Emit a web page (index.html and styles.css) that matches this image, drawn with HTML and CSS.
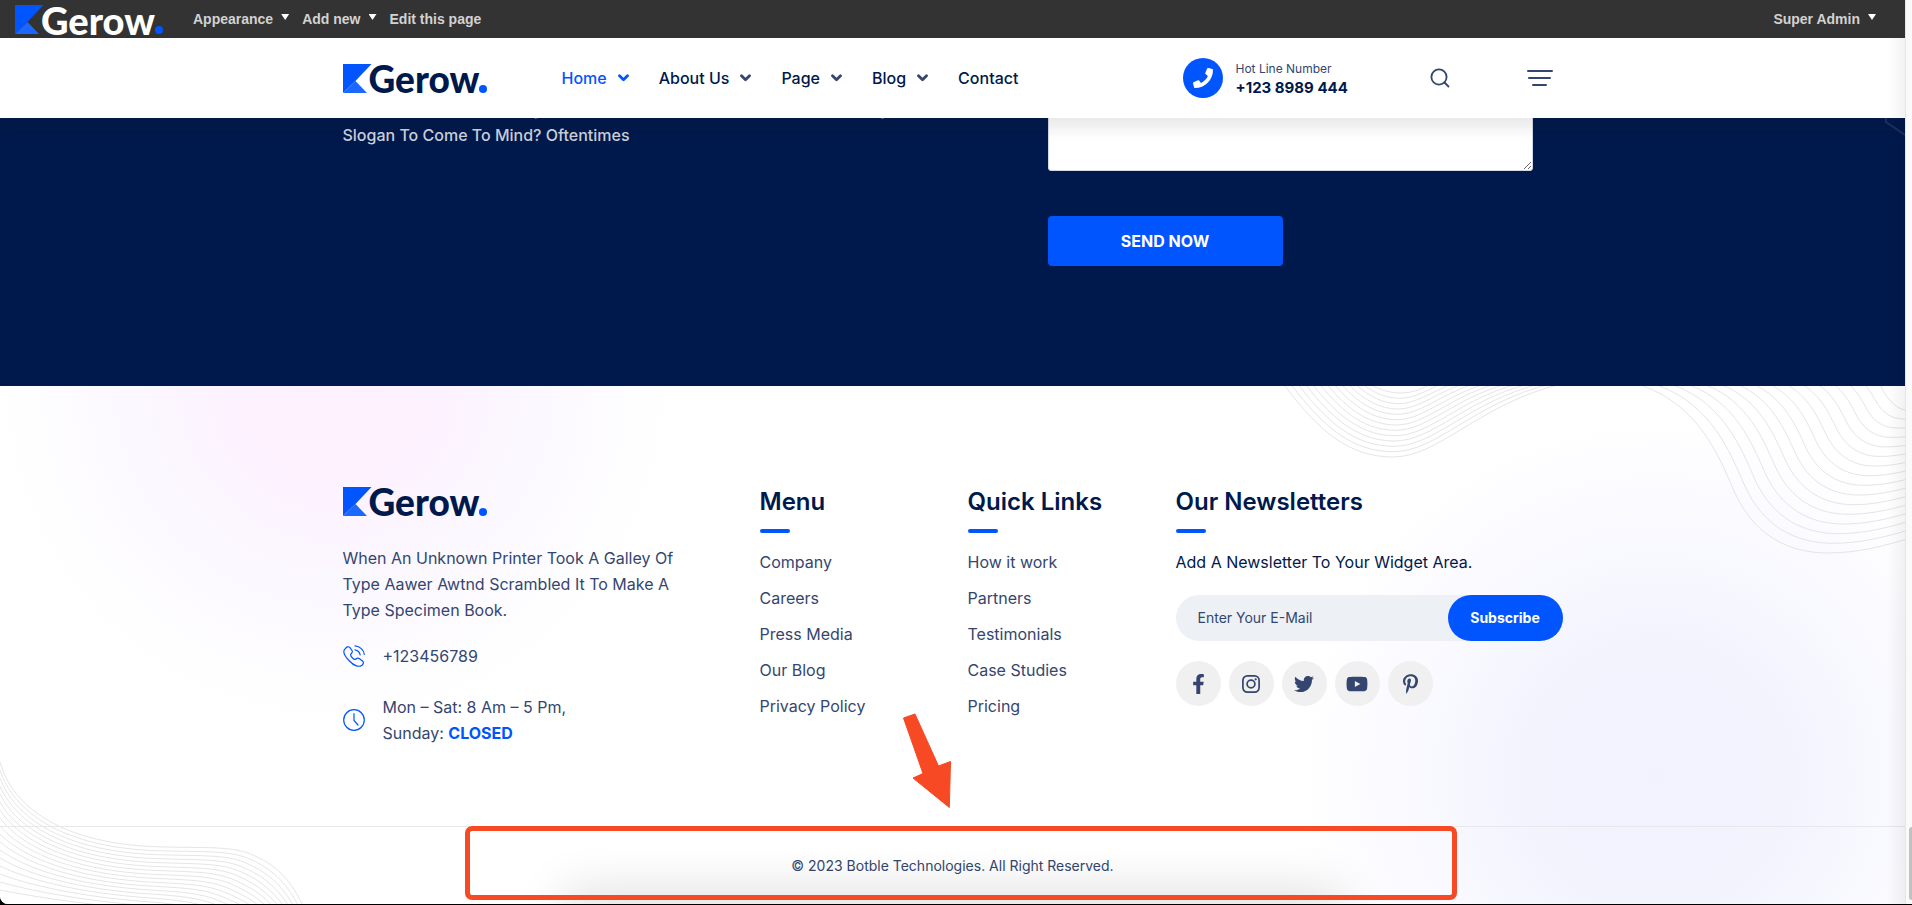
FILE: index.html
```html
<!DOCTYPE html>
<html lang="en">
<head>
<meta charset="utf-8">
<title>Gerow</title>
<link rel="stylesheet" href="styles.css">
</head>
<body>
<svg class="symbols" aria-hidden="true">
  <symbol id="mark" viewBox="0 0 29 29"><path d="M0 0H28.500L12.500 17L0 29Z" fill="#0055ff"/><path d="M0 29L12.500 17L24 29Z" fill="#1c68ff"/></symbol>
  <symbol id="chevron" viewBox="0 0 11 8"><path d="M1.500 1.800L5.500 5.800L9.500 1.800" fill="none" stroke="currentColor" stroke-width="2.800" stroke-linecap="round" stroke-linejoin="round"/></symbol>
</svg>
<div class="page">
  <div class="top">
    <div class="admin-bar">
      <a class="logo logo-light" href="#"><svg class="logo-mark"><use href="#mark"/></svg><span class="logo-name">Gerow</span><i class="logo-dot"></i></a>
      <nav class="admin-menu">
        <a class="has-caret" href="#">Appearance</a>
        <a class="has-caret" href="#">Add new</a>
        <a href="#">Edit this page</a>
      </nav>
      <a class="has-caret admin-user" href="#">Super Admin</a>
    </div>
    <header class="site-header">
      <div class="container header-row">
        <a class="logo" href="#"><svg class="logo-mark"><use href="#mark"/></svg><span class="logo-name">Gerow</span><i class="logo-dot"></i></a>
        <nav class="main-nav">
          <a class="active" href="#">Home <svg class="chevron"><use href="#chevron"/></svg></a>
          <a href="#">About Us <svg class="chevron"><use href="#chevron"/></svg></a>
          <a href="#">Page <svg class="chevron"><use href="#chevron"/></svg></a>
          <a href="#">Blog <svg class="chevron"><use href="#chevron"/></svg></a>
          <a href="#">Contact</a>
        </nav>
        <div class="header-actions">
          <div class="hotline">
            <span class="hotline-icon"><svg width="20" height="20" viewBox="0 0 512 512"><path fill="#fff" d="M493.400 24.600l-104-24c-11.300-2.600-22.900 3.300-27.500 13.900l-48 112c-4.200 9.800-1.400 21.300 6.900 28l60.600 49.600c-36 76.700-98.900 140.500-177.200 177.200l-49.600-60.600c-6.800-8.300-18.200-11.100-28-6.900l-112 48C3.900 366.500-2 378.100.6 389.400l24 104C27.100 504.200 36.700 512 48 512c256.100 0 464-207.500 464-464 0-11.200-7.700-20.900-18.600-23.400z"/></svg></span>
            <div class="hotline-text"><span>Hot Line Number</span><a href="#">+123 8989 444</a></div>
          </div>
          <button class="icon-button" type="button" aria-label="Search"><svg width="20" height="20" viewBox="0 0 20 20" fill="none" stroke="#34466f" stroke-width="1.800" stroke-linecap="round"><circle cx="9" cy="9" r="7.600"/><path d="M14.500 14.500L18.500 18.500"/></svg></button>
          <button class="icon-button" type="button" aria-label="Open menu"><svg width="26" height="18" viewBox="0 0 26 18" fill="none" stroke="#34466f" stroke-width="2" stroke-linecap="round"><path d="M1 2H25M2 9H23M6 16H19"/></svg></button>
        </div>
      </div>
    </header>
  </div>

  <section class="contact">
    <svg class="contact-shape" width="20" height="18" viewBox="0 0 20 18"><path d="M1 0V4L20 17" fill="none" stroke="#1b3263" stroke-width="2"/></svg>
    <div class="container contact-row">
      <p class="contact-text">Ever Find Yourself Staring At Your Computer Screen A Good Consulting<br>Slogan To Come To Mind? Oftentimes</p>
      <form class="contact-form">
        <textarea aria-label="Message"></textarea>
        <button class="send" type="button">SEND NOW</button>
      </form>
    </div>
  </section>

  <footer class="footer">
    <svg class="waves waves-right" width="640" height="180" viewBox="1266 0 640 180" data-waves="right"></svg>
    <svg class="waves waves-left" width="320" height="160" viewBox="0 744 320 160" data-waves="left"></svg>
    <div class="container footer-grid">
      <div class="about">
        <a class="logo" href="#"><svg class="logo-mark"><use href="#mark"/></svg><span class="logo-name">Gerow</span><i class="logo-dot"></i></a>
        <p>When An Unknown Printer Took A Galley Of<br>Type Aawer Awtnd Scrambled It To Make A<br>Type Specimen Book.</p>
        <ul class="info">
          <li><svg width="22" height="22" viewBox="0 0 22 22" fill="none" stroke="#0055ff" stroke-width="1.200" stroke-linecap="round"><path d="M2 4C3.500 2 5.500 .9 7 2.600L9 5.500C10 7 9 8 8 9C7 10 8 11.500 9.500 13C11 14.500 12 15 13 14C14 13 15 12.500 16.500 13.700L19.500 16C21 17.500 20.500 19 19 20.200C16 22.500 11 21 6.500 16C1 10.500-.5 6.500 2 4ZM12 .8C17 1.300 20.800 5 21.300 9.500M12 4.800C14.500 5.200 16.700 7.300 17.200 10"/></svg><span>+123456789</span></li>
          <li><svg width="22" height="22" viewBox="0 0 22 22" fill="none" stroke="#0055ff" stroke-width="1.200" stroke-linecap="round"><circle cx="11" cy="11" r="10.300"/><path d="M11 4.500V11.500L15 16"/></svg><span>Mon – Sat: 8 Am – 5 Pm,<br>Sunday: <b>CLOSED</b></span></li>
        </ul>
      </div>
      <div>
        <h2>Menu</h2>
        <ul class="links">
          <li><a href="#">Company</a></li>
          <li><a href="#">Careers</a></li>
          <li><a href="#">Press Media</a></li>
          <li><a href="#">Our Blog</a></li>
          <li><a href="#">Privacy Policy</a></li>
        </ul>
      </div>
      <div>
        <h2>Quick Links</h2>
        <ul class="links">
          <li><a href="#">How it work</a></li>
          <li><a href="#">Partners</a></li>
          <li><a href="#">Testimonials</a></li>
          <li><a href="#">Case Studies</a></li>
          <li><a href="#">Pricing</a></li>
        </ul>
      </div>
      <div>
        <h2>Our Newsletters</h2>
        <p class="news-text">Add A Newsletter To Your Widget Area.</p>
        <form class="subscribe">
          <input type="email" placeholder="Enter Your E-Mail" aria-label="E-mail">
          <button type="button">Subscribe</button>
        </form>
        <div class="social">
          <a href="#" aria-label="Facebook"><svg width="13" height="20" viewBox="0 0 320 512"><path d="M279.140 288l14.220-92.660h-88.910v-60.130c0-25.350 12.420-50.060 52.240-50.060h40.420V6.260S260.430 0 225.360 0c-73.220 0-121.080 44.380-121.080 124.720v70.620H22.890V288h81.390v224h100.170V288z"/></svg></a>
          <a href="#" aria-label="Instagram"><svg width="18" height="18" viewBox="0 0 18 18"><g fill="none" stroke="#34466f" stroke-width="1.700"><rect x="0.900" y="0.900" width="16.200" height="16.200" rx="4.500"/><circle cx="9" cy="9" r="3.900"/></g><circle cx="13.700" cy="4.300" r="1.100"/></svg></a>
          <a href="#" aria-label="Twitter"><svg width="20" height="20" viewBox="0 0 512 512"><path d="M459.370 151.716c.325 4.548.325 9.097.325 13.645 0 138.720-105.583 298.558-298.558 298.558-59.452 0-114.680-17.219-161.137-47.106 8.447.974 16.568 1.299 25.340 1.299 49.055 0 94.213-16.568 130.274-44.832-46.132-.975-84.792-31.188-98.112-72.772 6.498.974 12.995 1.624 19.818 1.624 9.421 0 18.843-1.300 27.614-3.573-48.081-9.747-84.143-51.980-84.143-102.985v-1.299c13.969 7.797 30.214 12.670 47.431 13.319-28.264-18.843-46.781-51.005-46.781-87.391 0-19.492 5.197-37.360 14.294-52.954 51.655 63.675 129.300 105.258 216.365 109.807-1.624-7.797-2.599-15.918-2.599-24.040 0-57.828 46.782-104.934 104.934-104.934 30.213 0 57.502 12.670 76.670 33.137 23.715-4.548 46.456-13.320 66.599-25.340-7.798 24.366-24.366 44.833-46.132 57.827 21.117-2.273 41.584-8.122 60.426-16.243-14.292 20.791-32.161 39.308-52.628 54.253z"/></svg></a>
          <a href="#" aria-label="YouTube"><svg width="22" height="20" viewBox="0 0 576 512"><path d="M549.655 124.083c-6.281-23.650-24.787-42.276-48.284-48.597C458.781 64 288 64 288 64S117.220 64 74.629 75.486c-23.497 6.322-42.003 24.947-48.284 48.597-11.412 42.867-11.412 132.305-11.412 132.305s0 89.438 11.412 132.305c6.281 23.650 24.787 41.500 48.284 47.821C117.220 448 288 448 288 448s170.780 0 213.371-11.486c23.497-6.321 42.003-24.171 48.284-47.821 11.412-42.867 11.412-132.305 11.412-132.305s0-89.438-11.412-132.305zm-317.510 213.508V175.185l142.739 81.205-142.739 81.201z"/></svg></a>
          <a href="#" aria-label="Pinterest"><svg width="15" height="20" viewBox="0 0 384 512"><path d="M204 6.500C101.400 6.500 0 74.900 0 185.600 0 256 39.600 296 63.600 296c9.900 0 15.600-27.600 15.600-35.400 0-9.300-23.700-29.100-23.700-67.800 0-80.400 61.200-137.400 140.400-137.400 68.100 0 118.500 38.700 118.500 109.800 0 53.100-21.300 152.700-90.300 152.700-24.900 0-46.200-18-46.200-43.800 0-37.800 26.400-74.400 26.400-113.400 0-66.200-93.900-54.200-93.900 25.800 0 16.800 2.100 35.400 9.600 50.700-13.800 59.400-42 147.900-42 209.100 0 18.900 2.700 37.500 4.500 56.400 3.400 3.800 1.700 3.400 6.900 1.500 50.400-69 48.600-82.500 71.400-172.800 12.300 23.400 44.100 36 69.300 36 106.200 0 153.900-103.500 153.900-196.800C384 71.300 298.200 6.500 204 6.500z"/></svg></a>
        </div>
      </div>
    </div>
    <div class="copyright"><p>© 2023 Botble Technologies. All Right Reserved.</p></div>
    <div class="callout"><svg class="callout-arrow" width="52" height="100" viewBox="0 0 52 100"><path d="M2.500 7L14 3L37.500 55L49.500 50.500L48.300 96.500L12 67L22 62.500Z" fill="#f64924" stroke="#f64924" stroke-linejoin="round"/></svg></div>
  </footer>
</div>
<div class="scrollbar"><div class="thumb"></div></div>
<script src="waves.js"></script>
</body>
</html>
```

FILE: styles.css
```css
* { box-sizing: border-box; margin: 0; padding: 0; }
body {
  display: grid;
  grid-template-columns: 1fr 7px;
  height: 100vh;
  padding-bottom: 1px;
  background: #000;
  font: 400 16px/26px Inter, "Open Sans", sans-serif;
  color: #34466f;
  overflow: hidden;
}
a { color: inherit; text-decoration: none; }
ul { list-style: none; }
button, input, textarea { font: inherit; border: 0; }
button { cursor: pointer; }
svg { display: block; flex: none; }
.symbols { position: absolute; width: 0; height: 0; }

.page {
  position: relative;
  display: flex;
  flex-direction: column;
  min-height: 0;
  background: #fff;
  border-bottom-left-radius: 8px;
  overflow: hidden;
}
.page::after {
  content: "";
  position: absolute;
  z-index: 3;
  inset: 38px 0 0 auto;
  width: 18px;
  background: linear-gradient(to left, rgba(0, 0, 0, .05), transparent);
  pointer-events: none;
}
.container { width: 100%; max-width: 1220px; margin: 0 auto; }

.logo { display: flex; align-items: flex-end; width: 144px; height: 29px; color: #00194c; }
.logo-mark { width: 29px; height: 29px; margin-right: -3px; }
.logo-name { font: 900 37px/36px Lato, sans-serif; margin-bottom: -4px; }
.logo-dot { flex: none; width: 8px; height: 8px; border-radius: 50%; background: #0055ff; }
.logo-light { color: #fff; }
.logo-light .logo-name { font-size: 38px; }

.top { position: absolute; z-index: 2; inset: 0 0 auto; }
.admin-bar {
  display: flex;
  align-items: center;
  height: 38px;
  padding: 0 29px 0 15px;
  background: #333;
  color: #d2d2d2;
  font: bold 14px/20px "Liberation Sans", Arial, sans-serif;
}
.admin-menu { display: flex; gap: 13px; margin-left: 34px; }
.admin-user { margin-left: auto; }
.has-caret { display: flex; gap: 8px; }
.has-caret::after {
  content: "";
  margin-top: 5px;
  width: 8px;
  height: 6px;
  background: #fff;
  clip-path: polygon(0 0, 100% 0, 50% 100%);
}

.site-header { background: #fff; box-shadow: 0 10px 15px rgba(25, 25, 25, .1); }
.header-row { display: flex; align-items: center; height: 80px; padding-right: 10px; }
.main-nav { display: flex; gap: 30px; margin-left: 75px; color: #00194c; font-weight: 500; }
.main-nav a { display: flex; align-items: center; gap: 11px; white-space: nowrap; }
.main-nav .active, .main-nav .active .chevron { color: #0055ff; }
.chevron { width: 11px; height: 8px; color: #34466f; }
.header-actions { display: flex; align-items: center; gap: 77px; margin-left: auto; }
.hotline { display: flex; align-items: center; gap: 13px; width: 170px; white-space: nowrap; }
.hotline-icon { display: grid; place-items: center; flex: none; width: 40px; height: 40px; border-radius: 50%; background: #0055ff; }
.hotline-text { display: grid; font-size: 12px; line-height: 19px; }
.hotline-text a { color: #00194c; font-size: 15px; font-weight: 700; }
.icon-button { background: none; }

.contact { position: relative; padding: 20px 0 120px; background: #00194c; }
.contact-shape { position: absolute; top: 118px; right: 0; }
.contact-row { display: grid; grid-template-columns: 1fr 485px; padding-right: 30px; }
.contact-text { margin-top: 76px; color: #ccd1db; font-weight: 500; }
.contact-form { display: grid; justify-items: start; gap: 45px; }
.contact-form textarea { width: 100%; height: 151px; background: #fff; border: 1px solid #d3d8e8; border-radius: 3px; resize: vertical; }
.send { width: 235px; height: 50px; border-radius: 4px; background: #0055ff; color: #fff; font-weight: 700; }

.footer {
  position: relative;
  flex: 1;
  display: flex;
  flex-direction: column;
  background:
    radial-gradient(circle at 335px 0, #fdf1ff 0, #fdf2ff 100px, #fbf8ff 200px, transparent 340px),
    radial-gradient(circle at calc(100% - 248px) 390px, #f2f2fe 0, #f3f3fe 130px, #f9f9ff 240px, transparent 360px),
    #fff;
}
.waves { position: absolute; fill: none; stroke: #e5e5e7; }
.waves-right { top: 0; right: 0; }
.waves-left { bottom: 0; left: 0; }
.footer-grid {
  position: relative;
  flex: 1;
  display: grid;
  grid-template-columns: 417fr 208fr 208fr 387fr;
  padding-top: 101px;
}
.about p { margin: 29px 0 20px; }
.info { display: grid; gap: 25px; }
.info li { display: flex; align-items: center; gap: 18px; }
.info b { color: #0055ff; font-weight: 700; }
h2 { color: #00194c; font-size: 24px; line-height: 30px; font-weight: 600; white-space: nowrap; }
h2::after { content: ""; display: block; width: 30px; height: 4px; margin: 12px 0 16px; border-radius: 2px; background: #0055ff; }
.links { display: grid; gap: 10px; }
.news-text { color: #00194c; margin-bottom: 20px; }
.subscribe { display: flex; height: 46px; border-radius: 23px; background: #edf1f6; }
.subscribe input { flex: 1; min-width: 0; padding-left: 22px; background: none; font-size: 14px; }
.subscribe input::placeholder { color: #34466f; }
.subscribe button { width: 115px; border-radius: 23px; background: #0055ff; color: #fff; font-size: 14px; font-weight: 700; }
.social { display: flex; gap: 8px; margin-top: 20px; }
.social a { display: grid; place-items: center; width: 45px; height: 45px; border-radius: 50%; background: #f0f0f0; fill: #34466f; }
.copyright { position: relative; height: 78px; padding-top: 26px; border-top: 1px solid #e8e8ea; text-align: center; font-size: 14px; overflow: hidden; }
.copyright::after {
  content: "";
  position: absolute;
  left: 30%;
  right: 30%;
  top: 100%;
  height: 10px;
  box-shadow: 0 0 50px 8px rgba(0, 0, 0, .2);
}
.callout {
  position: absolute;
  bottom: 4px;
  left: 465px;
  width: 992px;
  height: 74px;
  border: 5px solid #f64924;
  border-radius: 7px;
}
.callout-arrow { position: absolute; bottom: 84px; left: 431px; }

.scrollbar { display: flex; flex-direction: column; justify-content: flex-end; align-items: flex-end; padding-bottom: 4px; background: #fafafa; border-left: 1px solid #e6e6e6; }
.thumb { width: 3px; height: 73px; border-radius: 3px 0 0 3px; background: #c1c1c1; }
```

FILE: waves.js
```js
// Each family of waves is a set of curves blended between an outer and an inner one.
function drawWaves(svg, outer, inner, count) {
  for (let i = 0; i < count; i++) {
    const t = i / (count - 1);
    const p = outer.map((v, k) => Math.round((v + (inner[k] - v) * t) * 10) / 10);
    const path = document.createElementNS("http://www.w3.org/2000/svg", "path");
    path.setAttribute("d", "M" + p.slice(0, 2) + " C" + p.slice(2).join(" "));
    svg.appendChild(path);
  }
}
const right = document.querySelector('[data-waves="right"]');
const left = document.querySelector('[data-waves="left"]');
drawWaves(right,
  [1286, 0, 1320, 45, 1350, 71, 1394, 71, 1440, 71, 1480, 18, 1562, -2],
  [1371, -2, 1380, 4, 1392, 7, 1401, 7, 1412, 7, 1422, 4, 1431, -2], 13);
drawWaves(right,
  [1644, 0, 1700, 20, 1720, 70, 1735, 105, 1755, 150, 1790, 167, 1829, 167, 1858, 167, 1885, 160, 1908, 153],
  [1880, -4, 1883, 3, 1886, 8, 1889, 12, 1893, 17, 1897, 20, 1900, 22, 1903, 23, 1905, 24, 1908, 25], 16);
drawWaves(left,
  [0, 762, 12, 805, 60, 846, 167, 847, 210, 848, 235, 846, 255, 856, 280, 867, 293, 885, 302, 904],
  [0, 890, 30, 896, 80, 904, 150, 910, 170, 912, 185, 915, 200, 920, 215, 925, 230, 928, 240, 930], 17);
```
